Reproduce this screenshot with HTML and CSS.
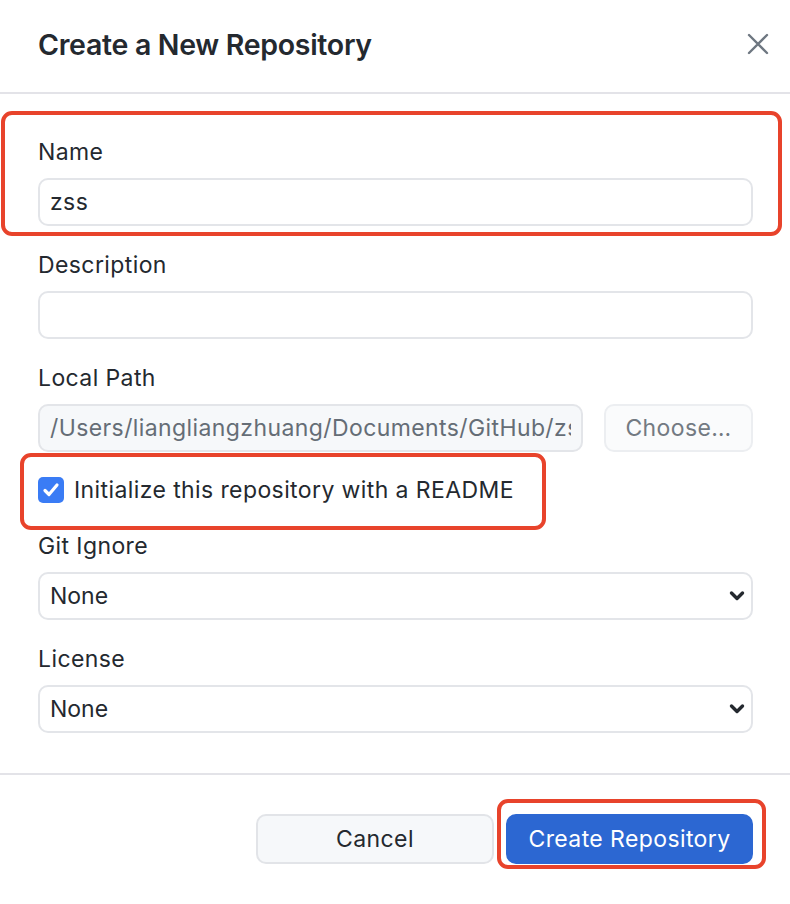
FILE: index.html
```html
<!DOCTYPE html>
<html lang="en">
<head>
<meta charset="utf-8">
<title>Create a New Repository</title>
<link rel="stylesheet" href="styles.css">
</head>
<body>
<div class="dialog">
  <header class="dlg-header">
    <h1 class="dlg-title">Create a New Repository</h1>
    <button class="close-btn" aria-label="Close">
      <svg width="22" height="22" viewBox="0 0 22 22"><path d="M2 2 L20 20 M20 2 L2 20" stroke="#6e7781" stroke-width="2.4" stroke-linecap="round" fill="none"/></svg>
    </button>
  </header>

  <div class="dlg-body">
    <div class="field annot-name">
      <label class="field-label">Name</label>
      <input class="text-input" type="text" value="zss">
    </div>

    <div class="field">
      <label class="field-label">Description</label>
      <input class="text-input" type="text" value="">
    </div>

    <div class="field">
      <label class="field-label">Local Path</label>
      <div class="path-row">
        <input class="text-input path-input" type="text" value="/Users/liangliangzhuang/Documents/GitHub/zss" readonly>
        <button class="choose-btn">Choose…</button>
      </div>
    </div>

    <div class="check-row annot-check">
      <span class="check-box">
        <svg width="20" height="20" viewBox="0 0 20 20"><path d="M4 10.5 L8 14.5 L16 5" stroke="#fff" stroke-width="3.2" stroke-linecap="round" stroke-linejoin="round" fill="none"/></svg>
      </span>
      <span class="check-text">Initialize this repository with a README</span>
    </div>

    <div class="field field-after-check">
      <label class="field-label">Git Ignore</label>
      <div class="select-box">
        <span>None</span>
        <svg class="chev" width="16" height="12" viewBox="0 0 16 12"><path d="M2.5 3 L8 8.5 L13.5 3" stroke="#24292f" stroke-width="3.4" stroke-linecap="round" stroke-linejoin="round" fill="none"/></svg>
      </div>
    </div>

    <div class="field field-last">
      <label class="field-label">License</label>
      <div class="select-box">
        <span>None</span>
        <svg class="chev" width="16" height="12" viewBox="0 0 16 12"><path d="M2.5 3 L8 8.5 L13.5 3" stroke="#24292f" stroke-width="3.4" stroke-linecap="round" stroke-linejoin="round" fill="none"/></svg>
      </div>
    </div>
  </div>

  <footer class="dlg-footer">
    <button class="btn btn-cancel">Cancel</button>
    <button class="btn btn-primary annot-create">Create Repository</button>
  </footer>
</div>
</body>
</html>
```

FILE: styles.css
```css
* { box-sizing: border-box; }

html, body {
  margin: 0;
  padding: 0;
  background: #ffffff;
}

body {
  font-family: "Inter", "Liberation Sans", "DejaVu Sans", sans-serif;
  color: #24292f;
  width: 790px;
  height: 904px;
  overflow: hidden;
}

.dialog {
  width: 790px;
}

.dlg-header {
  height: 94px;
  display: flex;
  align-items: center;
  justify-content: space-between;
  padding: 0 21px 4px 38px;
  border-bottom: 2px solid #e3e3e8;
}

.dlg-title {
  margin: 0;
  font-size: 28.5px;
  font-weight: 600;
  letter-spacing: -0.3px;
  color: #24292f;
}

.close-btn {
  border: 0;
  background: none;
  padding: 0;
  width: 22px;
  height: 22px;
  display: flex;
}

.dlg-body {
  padding: 45px 37px 40px 38px;
}

.field {
  margin-bottom: 26px;
}

.field-last {
  margin-bottom: 0;
}

.field-label {
  display: block;
  font-size: 23px;
  letter-spacing: 0.4px;
  line-height: 26px;
  margin-bottom: 13px;
  color: #24292f;
}

.text-input {
  display: block;
  width: 100%;
  height: 48px;
  border: 2px solid #e3e5e9;
  border-radius: 10px;
  padding: 0 10px;
  font-family: inherit;
  font-size: 23px;
  letter-spacing: 0.4px;
  color: #24292f;
  background: #ffffff;
  outline: none;
}

.path-row {
  display: flex;
  gap: 21px;
}

.path-input {
  flex: 1;
  min-width: 0;
  background: #f6f8fa;
  color: #656d76;
}

.choose-btn {
  width: 149px;
  height: 48px;
  flex: none;
  border: 2px solid #eceef1;
  border-radius: 10px;
  background: #fafbfc;
  font-family: inherit;
  font-size: 23px;
  letter-spacing: 0.4px;
  color: #737a82;
}

.check-row {
  position: relative;
  display: flex;
  align-items: center;
  gap: 10px;
  height: 26px;
  margin-top: -1px;
}

.check-box {
  width: 26px;
  height: 26px;
  border-radius: 5px;
  background: #3a7cf5;
  display: flex;
  align-items: center;
  justify-content: center;
}

.check-text {
  font-size: 23px;
  letter-spacing: 0.4px;
  line-height: 26px;
  color: #24292f;
}

.field-after-check {
  margin-top: 30px;
}

.select-box {
  height: 48px;
  border: 2px solid #e3e5e9;
  border-radius: 10px;
  padding: 0 6px 0 10px;
  display: flex;
  align-items: center;
  justify-content: space-between;
  font-size: 23px;
  color: #24292f;
}

.dlg-footer {
  border-top: 2px solid #e3e3e8;
  padding: 39px 37px 0 0;
  display: flex;
  justify-content: flex-end;
  gap: 12px;
}

.btn {
  height: 50px;
  border-radius: 10px;
  font-family: inherit;
  font-size: 23px;
  letter-spacing: 0.4px;
}

.btn-cancel {
  width: 238px;
  background: #f6f8fa;
  border: 2px solid #e2e4e8;
  color: #24292f;
}

.btn-primary {
  width: 247px;
  background: #2c67d2;
  border: 2px solid #2c67d2;
  color: #ffffff;
}

/* Red annotation boxes drawn over the UI */
.annot-name,
.annot-create {
  position: relative;
}

.annot-name::after,
.annot-check::after,
.annot-create::after {
  content: "";
  position: absolute;
  border: 4px solid #e8432b;
  border-radius: 11px;
  pointer-events: none;
}

.annot-name::after {
  left: -37px;
  top: -28px;
  right: -29px;
  bottom: -10px;
}

.annot-check::after {
  left: -18px;
  top: -24px;
  width: 518px;
  height: 69px;
}

.annot-create::after {
  left: -11px;
  top: -17px;
  right: -15px;
  bottom: -7px;
}
```
